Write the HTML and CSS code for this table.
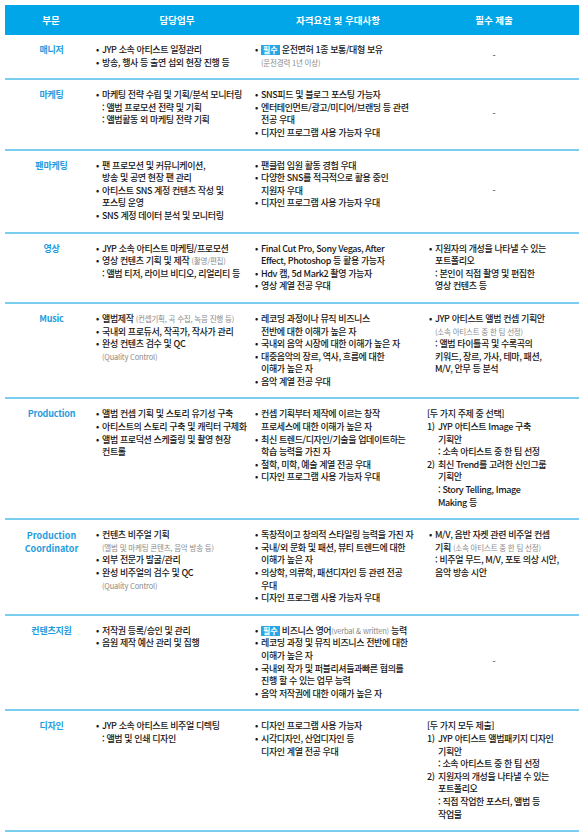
FILE: index.html
```html
<!DOCTYPE html>
<html lang="ko">
<head>
<meta charset="utf-8">
<link rel="stylesheet" href="styles.css">
</head>
<body>
<div class="table">
  <div class="head">
    <div class="h h1">부문</div>
    <div class="h h2">담당업무</div>
    <div class="h h3">자격요건 및 우대사항</div>
    <div class="h h4">필수 제출</div>
  </div>

  <div class="row">
    <div class="dept">매니저</div>
    <ul class="list c2">
      <li><span class="b">•</span><span class="t">JYP 소속 아티스트 일정관리</span></li>
      <li><span class="b">•</span><span class="t">방송, 행사 등 출연 섭외 현장 진행 등</span></li>
    </ul>
    <ul class="list c3">
      <li><span class="b">•</span><span class="t"><span class="badge">필수</span> 운전면허 1종 보통/대형 보유<br><span class="sm">(운전경력 1년 이상)</span></span></li>
    </ul>
    <div class="dash">-</div>
  </div>

  <div class="row">
    <div class="dept">마케팅</div>
    <ul class="list c2">
      <li><span class="b">•</span><span class="t">마케팅 전략 수립 및 기획/분석 모니터링<br>: 앨범 프로모션 전략 및 기획<br>: 앨범활동 외 마케팅 전략 기획</span></li>
    </ul>
    <ul class="list c3">
      <li><span class="b">•</span><span class="t">SNS피드 및 블로그 포스팅 가능자</span></li>
      <li><span class="b">•</span><span class="t">엔터테인먼트/광고/미디어/브랜딩 등 관련<br>전공 우대</span></li>
      <li><span class="b">•</span><span class="t">디자인 프로그램 사용 가능자 우대</span></li>
    </ul>
    <div class="dash">-</div>
  </div>

  <div class="row">
    <div class="dept">팬마케팅</div>
    <ul class="list c2">
      <li><span class="b">•</span><span class="t">팬 프로모션 및 커뮤니케이션,<br>방송 및 공연 현장 팬 관리</span></li>
      <li><span class="b">•</span><span class="t">아티스트 SNS 계정 컨텐츠 작성 및<br>포스팅 운영</span></li>
      <li><span class="b">•</span><span class="t">SNS 계정 데이터 분석 및 모니터링</span></li>
    </ul>
    <ul class="list c3">
      <li><span class="b">•</span><span class="t">팬클럽 임원 활동 경험 우대</span></li>
      <li><span class="b">•</span><span class="t">다양한 SNS를 적극적으로 활용 중인<br>지원자 우대</span></li>
      <li><span class="b">•</span><span class="t">디자인 프로그램 사용 가능자 우대</span></li>
    </ul>
    <div class="dash">-</div>
  </div>

  <div class="row">
    <div class="dept">영상</div>
    <ul class="list c2">
      <li><span class="b">•</span><span class="t">JYP 소속 아티스트 마케팅/프로모션</span></li>
      <li><span class="b">•</span><span class="t">영상 컨텐츠 기획 및 제작 <span class="sm">(촬영/편집)</span><br>: 앨범 티저, 라이브 비디오, 리얼리티 등</span></li>
    </ul>
    <ul class="list c3">
      <li><span class="b">•</span><span class="t">Final Cut Pro, Sony Vegas, After<br>Effect, Photoshop 등 활용 가능자</span></li>
      <li><span class="b">•</span><span class="t">Hdv 캠, 5d Mark2 촬영 가능자</span></li>
      <li><span class="b">•</span><span class="t">영상 계열 전공 우대</span></li>
    </ul>
    <ul class="list c4">
      <li><span class="b">•</span><span class="t">지원자의 개성을 나타낼 수 있는<br>포트폴리오<br>: 본인이 직접 촬영 및 편집한<br>영상 컨텐츠 등</span></li>
    </ul>
  </div>

  <div class="row">
    <div class="dept">Music</div>
    <ul class="list c2">
      <li><span class="b">•</span><span class="t">앨범제작 <span class="sm">(컨셉기획, 곡 수집, 녹음 진행 등)</span></span></li>
      <li><span class="b">•</span><span class="t">국내외 프로듀서, 작곡가, 작사가 관리</span></li>
      <li><span class="b">•</span><span class="t">완성 컨텐츠 검수 및 QC<br><span class="sm">(Quality Control)</span></span></li>
    </ul>
    <ul class="list c3">
      <li><span class="b">•</span><span class="t">레코딩 과정이나 뮤직 비즈니스<br>전반에 대한 이해가 높은 자</span></li>
      <li><span class="b">•</span><span class="t">국내외 음악 시장에 대한 이해가 높은 자</span></li>
      <li><span class="b">•</span><span class="t">대중음악의 장르, 역사, 흐름에 대한<br>이해가 높은 자</span></li>
      <li><span class="b">•</span><span class="t">음악 계열 전공 우대</span></li>
    </ul>
    <ul class="list c4">
      <li><span class="b">•</span><span class="t">JYP 아티스트 앨범 컨셉 기획안<br><span class="sm">(소속 아티스트 중 한 팀 선정)</span><br>: 앨범 타이틀곡 및 수록곡의<br>키워드, 장르, 가사, 테마, 패션,<br>M/V, 안무 등 분석</span></li>
    </ul>
  </div>

  <div class="row">
    <div class="dept">Production</div>
    <ul class="list c2">
      <li><span class="b">•</span><span class="t">앨범 컨셉 기획 및 스토리 유기성 구축</span></li>
      <li><span class="b">•</span><span class="t">아티스트의 스토리 구축 및 캐릭터 구체화</span></li>
      <li><span class="b">•</span><span class="t">앨범 프로덕션 스케줄링 및 촬영 현장<br>컨트롤</span></li>
    </ul>
    <ul class="list c3">
      <li><span class="b">•</span><span class="t">컨셉 기획부터 제작에 이르는 창작<br>프로세스에 대한 이해가 높은 자</span></li>
      <li><span class="b">•</span><span class="t">최신 트렌드/디자인/기술을 업데이트하는<br>학습 능력을 가진 자</span></li>
      <li><span class="b">•</span><span class="t">철학, 미학, 예술 계열 전공 우대</span></li>
      <li><span class="b">•</span><span class="t">디자인 프로그램 사용 가능자 우대</span></li>
    </ul>
    <div class="c4 plain">
      <div>[두 가지 주제 중 선택]</div>
      <ol class="num">
        <li><span class="n">1)</span><span class="t">JYP 아티스트 Image 구축<br>기획안<br>: 소속 아티스트 중 한 팀 선정</span></li>
        <li><span class="n">2)</span><span class="t">최신 Trend를 고려한 신인그룹<br>기획안<br>: Story Telling, Image<br>Making 등</span></li>
      </ol>
    </div>
  </div>

  <div class="row">
    <div class="dept two"><span class="ln">Production</span><span class="ln">Coordinator</span></div>
    <ul class="list c2">
      <li><span class="b">•</span><span class="t">컨텐츠 비주얼 기획<br><span class="sm">(앨범 및 마케팅 콘텐츠, 음악 방송 등)</span></span></li>
      <li><span class="b">•</span><span class="t">외부 전문가 발굴/관리</span></li>
      <li><span class="b">•</span><span class="t">완성 비주얼의 검수 및 QC<br><span class="sm">(Quality Control)</span></span></li>
    </ul>
    <ul class="list c3">
      <li><span class="b">•</span><span class="t">독창적이고 창의적 스타일링 능력을 가진 자</span></li>
      <li><span class="b">•</span><span class="t">국내/외 문화 및 패션, 뷰티 트렌드에 대한<br>이해가 높은 자</span></li>
      <li><span class="b">•</span><span class="t">의상학, 의류학, 패션디자인 등 관련 전공<br>우대</span></li>
      <li><span class="b">•</span><span class="t">디자인 프로그램 사용 가능자 우대</span></li>
    </ul>
    <ul class="list c4">
      <li><span class="b">•</span><span class="t">M/V, 음반 자켓 관련 비주얼 컨셉<br>기획 <span class="sm">(소속 아티스트 중 한 팀 선정)</span><br>: 비주얼 무드, M/V, 포토 의상 시안,<br>음악 방송 시안</span></li>
    </ul>
  </div>

  <div class="row">
    <div class="dept">컨텐츠지원</div>
    <ul class="list c2">
      <li><span class="b">•</span><span class="t">저작권 등록/승인 및 관리</span></li>
      <li><span class="b">•</span><span class="t">음원 제작 예산 관리 및 집행</span></li>
    </ul>
    <ul class="list c3">
      <li><span class="b">•</span><span class="t"><span class="badge">필수</span> 비즈니스 영어<span class="sm">(verbal &amp; written)</span> 능력</span></li>
      <li><span class="b">•</span><span class="t">레코딩 과정 및 뮤직 비즈니스 전반에 대한<br>이해가 높은 자</span></li>
      <li><span class="b">•</span><span class="t">국내외 작가 및 퍼블리셔들과빠른 협의를<br>진행 할 수 있는 업무 능력</span></li>
      <li><span class="b">•</span><span class="t">음악 저작권에 대한 이해가 높은 자</span></li>
    </ul>
    <div class="dash">-</div>
  </div>

  <div class="row">
    <div class="dept">디자인</div>
    <ul class="list c2">
      <li><span class="b">•</span><span class="t">JYP 소속 아티스트 비주얼 디렉팅<br>: 앨범 및 인쇄 디자인</span></li>
    </ul>
    <ul class="list c3">
      <li><span class="b">•</span><span class="t">디자인 프로그램 사용 가능자</span></li>
      <li><span class="b">•</span><span class="t">시각디자인, 산업디자인 등<br>디자인 계열 전공 우대</span></li>
    </ul>
    <div class="c4 plain">
      <div>[두 가지 모두 제출]</div>
      <ol class="num">
        <li><span class="n">1)</span><span class="t">JYP 아티스트 앨범패키지 디자인<br>기획안<br>: 소속 아티스트 중 한 팀 선정</span></li>
        <li><span class="n">2)</span><span class="t">지원자의 개성을 나타낼 수 있는<br>포트폴리오<br>: 직접 작업한 포스터, 앨범 등<br>작업물</span></li>
      </ol>
    </div>
  </div>
</div>
</body>
</html>
```

FILE: styles.css
```css
* { box-sizing: border-box; }
html, body { margin: 0; padding: 0; background: #fff; }
body {
  padding: 5px 5px 0 5px;
  font-family: "Noto Sans CJK KR", "Noto Sans", sans-serif;
  font-size: 9px;
  line-height: 12.6px;
  color: #161616;
  font-weight: 500;
  letter-spacing: -0.4px;
}
.table { width: 574px; }
.head, .row {
  display: grid;
  grid-template-columns: 89px 159px 174px 152px;
}
.head {
  background: #00a6e8;
  height: 30px;
  align-items: center;
}
.h {
  color: #fff;
  font-weight: 700;
  font-size: 9.5px;
  text-align: center;
  letter-spacing: 0;
}
.h1 { padding-left: 3px; }
.h2 { padding-left: 7px; }
.h3 { padding-right: 4px; }
.h4 { padding-right: 18px; }
.row {
  padding: 9px 0;
  border-bottom: 2px solid #7ccdf1;
}
.dept {
  color: #1f9ce0;
  font-weight: 700;
  font-size: 9px;
  text-align: center;
  padding-left: 4px;
  line-height: 12.6px;
  letter-spacing: -0.2px;
}
.dept.two {
  display: flex;
  flex-direction: column;
  align-items: center;
  letter-spacing: 0;
}
.dept.two .ln {
  display: block;
  line-height: 13.2px;
}
.dept.two .ln + .ln { margin-top: -0.6px; }
.list {
  list-style: none;
  margin: 0;
  padding: 0;
  white-space: nowrap;
}
.list li { display: flex; }
.list .b { width: 8px; flex: none; padding-left: 2px; }
.list .t { display: block; }
.dash {
  align-self: center;
  text-align: center;
  padding-right: 18px;
  color: #555;
}
.plain { white-space: nowrap; }
.num { list-style: none; margin: 0; padding: 0; }
.num li { display: flex; }
.num .n { width: 11px; flex: none; }
.sm {
  color: #8a8a8a;
  font-size: 7.5px;
  font-weight: 400;
  letter-spacing: -0.2px;
}
.badge {
  display: inline-block;
  background: #29a7e4;
  color: #fff;
  font-weight: 700;
  font-size: 8px;
  line-height: 10px;
  padding: 0 2px;
  letter-spacing: 0;
}
```
